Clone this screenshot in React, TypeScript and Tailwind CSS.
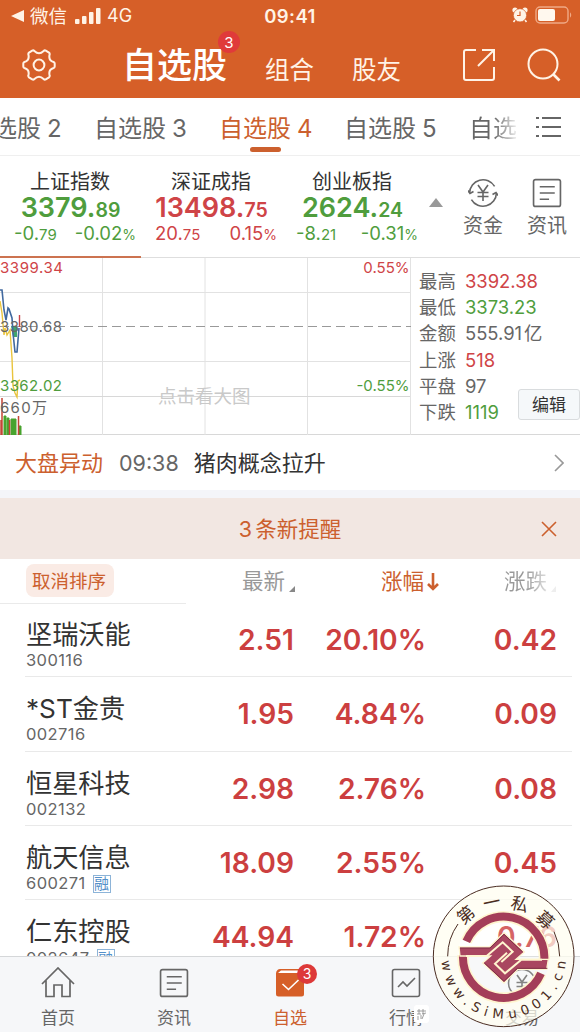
import type { ReactNode } from 'react'

type Tone = 'red' | 'green' | 'gray'

const toneText: Record<Tone, string> = {
  red: 'text-[#cf4447]',
  green: 'text-[#4f9d3d]',
  gray: 'text-[#666]',
}

const indices = [
  { name: '上证指数', whole: '3379.', frac: '89', diff: '-0.', diffFrac: '79', pct: '-0.02', tone: 'green' as Tone },
  { name: '深证成指', whole: '13498.', frac: '75', diff: '20.', diffFrac: '75', pct: '0.15', tone: 'red' as Tone },
  { name: '创业板指', whole: '2624.', frac: '24', diff: '-8.', diffFrac: '21', pct: '-0.31', tone: 'green' as Tone },
]

const stats = [
  { label: '最高', value: '3392.38', unit: '', tone: 'red' as Tone },
  { label: '最低', value: '3373.23', unit: '', tone: 'green' as Tone },
  { label: '金额', value: '555.91', unit: '亿', tone: 'gray' as Tone },
  { label: '上涨', value: '518', unit: '', tone: 'red' as Tone },
  { label: '平盘', value: '97', unit: '', tone: 'gray' as Tone },
  { label: '下跌', value: '1119', unit: '', tone: 'green' as Tone },
]

const stocks = [
  { name: '坚瑞沃能', code: '300116', price: '2.51', pct: '20.10%', diff: '0.42', margin: false },
  { name: '*ST金贵', code: '002716', price: '1.95', pct: '4.84%', diff: '0.09', margin: false },
  { name: '恒星科技', code: '002132', price: '2.98', pct: '2.76%', diff: '0.08', margin: false },
  { name: '航天信息', code: '600271', price: '18.09', pct: '2.55%', diff: '0.45', margin: true },
  { name: '仁东控股', code: '002647', price: '44.94', pct: '1.72%', diff: '0.76', margin: true },
]

function StatusBar() {
  return (
    <div className="grid h-8 grid-cols-3 items-center pl-[11px] pr-[8px] text-[#fff3e6]">
      <div className="flex items-center">
        <svg width="13" height="12" viewBox="0 0 13 12" fill="currentColor">
          <path d="M0 6 13 0V12Z" />
        </svg>
        <span className="ml-[6px] text-[18.5px] leading-8">微信</span>
        <svg className="ml-[8px]" width="26" height="16" viewBox="0 0 26 16" fill="currentColor">
          <rect x="0" y="11" width="4.5" height="5" rx="1" />
          <rect x="7" y="8" width="4.5" height="8" rx="1" />
          <rect x="14" y="4" width="4.5" height="12" rx="1" />
          <rect x="21" y="0" width="4.5" height="16" rx="1" />
        </svg>
        <span className="ml-[6px] text-[18px] leading-8">4G</span>
      </div>
      <div className="pr-[3px] text-center text-[18.5px] font-semibold leading-8 tracking-[0.4px]">09:41</div>
      <div className="flex items-center justify-end gap-[7px] pb-[2px]">
        <svg width="16" height="16" viewBox="0 0 16 16">
          <circle cx="3" cy="3" r="2.6" fill="currentColor" />
          <circle cx="13" cy="3" r="2.6" fill="currentColor" />
          <path d="m3 13-1.5 2M13 13l1.5 2" stroke="currentColor" strokeWidth="1.6" />
          <circle cx="8" cy="8.3" r="6.6" fill="currentColor" stroke="#d65f28" strokeWidth=".7" />
          <path d="M8 4.5v4H5" fill="none" stroke="#d65f28" strokeWidth="1.2" />
        </svg>
        <svg width="37" height="18" viewBox="0 0 37 18" fill="none">
          <rect x="1" y="1" width="32" height="16" rx="4" stroke="#f0a985" strokeWidth="1.4" />
          <rect x="3" y="3" width="17" height="12" rx="2" fill="#fff8ee" />
          <path d="M35 6.5c1.6.6 1.6 4.4 0 5Z" fill="#f0a985" />
        </svg>
      </div>
    </div>
  )
}

function Header() {
  return (
    <header className="h-[98px] shrink-0 bg-[#d65f28] text-[#fff3e6]">
      <StatusBar />
      <div className="flex h-[66px] items-center pl-[22px] pr-[19px]">
        <svg width="34" height="32" viewBox="0 0 34 32" fill="none" stroke="currentColor" strokeWidth="2" strokeLinejoin="round">
          <path d="M10.2 1.6 Q11.4 1 12.4 2 Q17 6.4 21.6 2 Q22.6 1 23.8 1.6 L27 3.6 Q28 4.4 27.6 5.6 Q26.2 11.4 31.6 13 Q32.7 13.4 32.7 14.4 V17.6 Q32.7 18.6 31.6 19 Q26.2 20.6 27.6 26.4 Q28 27.6 27 28.4 L23.8 30.4 Q22.6 31 21.6 30 Q17 25.6 12.4 30 Q11.4 31 10.2 30.4 L7 28.4 Q6 27.6 6.4 26.4 Q7.8 20.6 2.4 19 Q1.3 18.6 1.3 17.6 V14.4 Q1.3 13.4 2.4 13 Q7.8 11.4 6.4 5.6 Q6 4.4 7 3.6Z" />
          <circle cx="17" cy="16" r="5.4" />
        </svg>
        <div className="relative ml-[66px] w-[105px] whitespace-nowrap text-[35px] font-medium leading-[60px] text-white">
          自选股
          <span className="absolute -right-[13px] top-[-4px] flex size-[22px] items-center justify-center rounded-full bg-[#e03a3a] text-[15px] font-normal leading-none">3</span>
        </div>
        <span className="ml-[38px] pt-[9px] text-[24.5px] leading-8">组合</span>
        <span className="ml-[38px] pt-[9px] text-[24.5px] leading-8">股友</span>
        <svg className="ml-auto" width="34" height="34" viewBox="0 0 34 34" fill="none" stroke="currentColor" strokeWidth="2">
          <path d="M14 2H4Q2 2 2 4V30Q2 32 4 32H30Q32 32 32 30V19M20 2H32V13M32 2 16 18" />
        </svg>
        <svg className="ml-[31px]" width="34" height="34" viewBox="0 0 34 34" fill="none" stroke="currentColor" strokeWidth="2">
          <circle cx="16" cy="16" r="14.5" />
          <path d="m26.5 26.5 6 6" strokeWidth="2.6" />
        </svg>
      </div>
    </header>
  )
}

function GroupTabs() {
  return (
    <div className="flex h-[58px] shrink-0 border-b border-[#efefef] text-[24px] leading-[61px] text-[#666]">
      <div className="flex w-[518px] gap-[33px] overflow-hidden whitespace-nowrap">
        <span className="-ml-[31px] w-[92px] shrink-0">自选股<span className="ml-[6px]">2</span></span>
        <span className="w-[92px] shrink-0">自选股<span className="ml-[6px]">3</span></span>
        <span className="relative w-[92px] shrink-0 text-[#cc602e]">
          自选股<span className="ml-[6px]">4</span>
          <span className="absolute bottom-[3px] left-[31px] h-[5px] w-[31px] rounded-full bg-[#cc602e]" />
        </span>
        <span className="w-[92px] shrink-0">自选股<span className="ml-[6px]">5</span></span>
        <span className="w-[48px] shrink-0 bg-linear-to-r from-[#666] from-50% to-[#eee] bg-clip-text text-transparent">自选</span>
      </div>
      <svg className="ml-[17px] mt-[18px]" width="27" height="22" viewBox="0 0 27 22" fill="none" stroke="#666" strokeWidth="1.8">
        <path d="M1 2h3M7 2h19M1 11h3M7 11h19M1 20h3M7 20h19" />
      </svg>
    </div>
  )
}

function NewsIcon({ size }: { size: number }) {
  return (
    <svg width={size} height={size} viewBox="0 0 29 29" fill="none" stroke="#666" strokeWidth="1.6">
      <rect x="1.5" y="1.5" width="26" height="26" rx="2" />
      <path d="M7.5 8.5h14.5M7.5 14.5h14.5M7.5 20.5h9" />
    </svg>
  )
}

function IndexBar() {
  return (
    <div className="flex h-[102px] shrink-0 border-b border-[#dedede]">
      {indices.map((item, i) => (
        <div
          key={item.name}
          className={`flex w-[141px] flex-col items-center pt-[14px] ${i === 0 ? '-mb-px border-b-2 border-[#cc7350]' : ''}`}
        >
          <div className="pr-px text-[20px] leading-6 text-[#333]">{item.name}</div>
          <div className={`h-[26px] text-[27px] font-semibold leading-[27px] ${toneText[item.tone]}`}>
            {item.whole}<span className="text-[19.5px]">{item.frac}</span>
          </div>
          <div className={`mt-[1px] flex w-full justify-between pl-[14px] pr-[5px] text-[18.5px] leading-[25px] ${toneText[item.tone]}`}>
            <span>{item.diff}<span className="text-[15px]">{item.diffFrac}</span></span>
            <span>{item.pct}<span className="text-[14px]">%</span></span>
          </div>
        </div>
      ))}
      <svg className="ml-[6px] mt-[42px]" width="14" height="9" viewBox="0 0 14 9" fill="#999">
        <path d="M7 0 14 9H0Z" />
      </svg>
      <div className="ml-[19px] flex w-[42px] flex-col items-center pt-[22px]">
        <svg width="30" height="30" viewBox="0 0 30 30" fill="none" stroke="#666" strokeWidth="1.6">
          <path d="M1.6 15A13.4 13.4 0 0 1 26.6 8.4M28.4 15A13.4 13.4 0 0 1 3.4 21.6" />
          <path d="M0 12.5l2 3 3.5-2M30 17.5l-2-3-3.5 2" />
          <path d="m10 7 5 7 5-7M9.5 14.5h11M9.5 18.5h11M15 14v9" />
        </svg>
        <div className="mt-[2px] whitespace-nowrap text-[20px] leading-8 text-[#666]">资金</div>
      </div>
      <div className="ml-[22px] flex w-[42px] flex-col items-center pt-[22px]">
        <NewsIcon size={30} />
        <div className="mt-[2px] whitespace-nowrap text-[20px] leading-8 text-[#666]">资讯</div>
      </div>
    </div>
  )
}

function MinuteChart() {
  return (
    <svg width="411" height="177" viewBox="0 0 411 177" className="shrink-0" fontSize="15">
      <g stroke="#e2e2e2" fill="none">
        <path d="M0 34.5H410M0 103.5H410M102.5 0V177M205 0V177M307.5 0V177M410.5 0V177" />
        <path d="M0 138.5H410" stroke="#d8d8d8" />
      </g>
      <text x="158" y="145" fontSize="18.5" fill="#c9c9c9">点击看大图</text>
      <path d="M0 68.5H411" stroke="#999" strokeWidth="1.2" strokeDasharray="9 5" />
      <path d="M0 43 2 55 4 77 5 70 7 77 10 72 12 100 13 128 15 135 17 139 18 123 20 122" fill="none" stroke="#e9c43d" strokeWidth="1.4" />
      <path d="M11 68h6v11h-4Z" fill="#40a56e" />
      <path d="M0 32 2 32 4 52 6 62 8 50 9 51 12 60 13 75 15 94 17 94 19 70" fill="none" stroke="#41699f" strokeWidth="1.6" />
      <path d="M19.5 57V69" stroke="#c9454a" strokeWidth="1.4" />
      <path d="M4 158h2V177H4ZM7 160h2V177H7ZM11 161h5V177H11ZM19 168h2V177H19Z" fill="#48a32e" stroke="#48a32e" />
      <path d="M1 162V177M2 140V177M9.5 162V177M18.5 158V177" stroke="#c44536" strokeWidth="1.5" />
      <text x="0" y="15" fill="#cf4447" textLength="63">3399.34</text>
      <text x="0" y="74" fill="#666" textLength="62">3380.68</text>
      <text x="0" y="133" fill="#4f9d3d" textLength="62">3362.02</text>
      <text x="0" y="155" fill="#666" textLength="47">660万</text>
      <text x="409.5" y="15" fill="#cf4447" textAnchor="end">0.55%</text>
      <text x="409.5" y="133" fill="#4f9d3d" textAnchor="end">-0.55%</text>
    </svg>
  )
}

function MarketPanel() {
  return (
    <section className="flex h-[177px] shrink-0 border-b border-[#d8d8d8]">
      <MinuteChart />
      <div className="relative flex-1 pl-[8px] pt-[10px]">
        {stats.map((s) => (
          <div key={s.label} className="flex h-[26.2px] items-center text-[18.4px] leading-[26px]">
            <span className="w-[46px] text-[#666]">{s.label}</span>
            <span className={toneText[s.tone]}>{s.value}</span>
            {s.unit && <span className="ml-[2px] text-[#666]">{s.unit}</span>}
          </div>
        ))}
        <button className="absolute bottom-[14px] right-0 h-[31px] w-[62px] rounded-[3px] border border-[#d9dcde] bg-[#f5f8fa] pt-[2px] text-[17px] leading-none text-[#333]">
          编辑
        </button>
      </div>
    </section>
  )
}

function Notices() {
  return (
    <>
      <div className="flex h-[55px] shrink-0 items-center pl-[15px] pr-[16px] pt-px text-[22px]">
        <span className="text-[#cc602e]">大盘异动</span>
        <span className="ml-[16px] text-[21.5px] text-[#666]">09:38</span>
        <span className="ml-[15px] text-[#333]">猪肉概念拉升</span>
        <svg className="ml-auto" width="10" height="18" viewBox="0 0 10 18" fill="none" stroke="#999" strokeWidth="1.6">
          <path d="m1 1 8 8-8 8" />
        </svg>
      </div>
      <div className="h-2 shrink-0 bg-[#f4f5f9]" />
      <div className="grid h-[61px] shrink-0 grid-cols-[1fr_auto_1fr] items-center bg-[#f2e7e2] px-[23px] text-[21.5px] text-[#cc602e]">
        <span />
        <span className="pt-px"><span className="mr-[3px]">3</span>条新提醒</span>
        <svg className="justify-self-end" width="16" height="16" viewBox="0 0 16 16" fill="none" stroke="currentColor" strokeWidth="1.6">
          <path d="m1 1 14 14M15 1 1 15" />
        </svg>
      </div>
    </>
  )
}

function StockTable() {
  return (
    <section className="flex min-h-0 flex-1 flex-col overflow-hidden">
      <div className="grid h-[44px] shrink-0 grid-cols-[186px_109px_146px_115px] text-[21.5px] leading-[45px] text-[#999]">
        <div className="border-b border-[#eaeaea] pl-[26px] pt-[5px]">
          <div className="flex h-[33px] w-[88px] items-center justify-center rounded-lg bg-[#faebe5] pr-[2px] pt-px text-[18.5px] text-[#cc602e]">
            取消排序
          </div>
        </div>
        <div className="flex justify-end">
          最新
          <svg className="ml-[4px] mt-[27px]" width="6" height="6" fill="#888"><path d="M6 0V6H0Z" /></svg>
        </div>
        <div className="flex justify-end pr-[2px] text-[#cc602e]">
          涨幅
          <svg className="ml-[3px] mt-[14px]" width="12" height="18" viewBox="0 0 12 18" fill="none" stroke="currentColor" strokeWidth="2.6">
            <path d="M6 0V16M1 11l5 5 5-5" />
          </svg>
        </div>
        <div className="flex justify-end">
          <span className="bg-linear-to-r from-[#999] from-50% to-[#ddd] bg-clip-text text-transparent">涨跌</span>
          <svg className="ml-[4px] mt-[27px]" width="5" height="6" fill="#eee"><path d="M5 0V6H0Z" /></svg>
        </div>
      </div>
      {stocks.map((stock) => (
        <div
          key={stock.code}
          className="ml-[25px] mr-[8px] grid h-[74.3px] shrink-0 grid-cols-[161px_108px_132px_131px] border-b border-[#e9e9e9]"
        >
          <div className="pl-px pt-[14px]">
            <div className="text-[26.2px] leading-[36px] text-[#333]">{stock.name}</div>
            <div className="-mt-px flex items-center text-[16.5px] leading-[17px] text-[#666]">
              <span className="tracking-[0.4px]">{stock.code}</span>
              {stock.margin && (
                <span className="ml-[7px] flex size-[18px] items-center justify-center border border-[#8db4d8] text-[15px] text-[#5490c9]">融</span>
              )}
            </div>
          </div>
          {[stock.price, stock.pct, stock.diff].map((value, i) => (
            <div key={i} className="text-right text-[28.2px] font-semibold leading-[74px] text-[#cc3f40]">
              {value}
            </div>
          ))}
        </div>
      ))}
    </section>
  )
}

function NavItem({ label, active, children }: { label: string; active?: boolean; children: ReactNode }) {
  return (
    <div className={`flex flex-1 flex-col items-center pt-[10px] ${active ? 'text-[#cc602e]' : 'text-[#666]'}`}>
      <div className="relative flex h-[31px] items-center">{children}</div>
      <div className="mt-[7px] whitespace-nowrap text-[17px] leading-[26px]">{label}</div>
    </div>
  )
}

function BottomNav() {
  return (
    <nav className="flex h-[76px] shrink-0 border-t border-[#d5d7d9] bg-[#f6f7f9]">
      <NavItem label="首页">
        <svg width="34" height="31" viewBox="0 0 34 31" fill="none" stroke="currentColor" strokeWidth="1.7">
          <path d="M1 17 17 1l16 16M5 13.5V29.5H13V18H21V29.5H29V13.5" />
        </svg>
      </NavItem>
      <NavItem label="资讯"><NewsIcon size={30} /></NavItem>
      <NavItem label="自选" active>
        <svg width="30" height="30" viewBox="0 0 30 30" fill="none">
          <path d="M1 5Q2 1 5 1H25Q28 1 29 5V26Q29 28.5 26.5 28.5H3.5Q1 28.5 1 26Z" fill="#d65f28" />
          <path d="M3 5 6 2.5H24L27 5Z" fill="#fff" />
          <path d="m7.5 16 6 5.5 10-9.5" stroke="#fff" strokeWidth="1.6" />
        </svg>
        <span className="absolute -right-[12px] -top-[3px] flex size-[20px] items-center justify-center rounded-full bg-[#dd3939] text-[14px] leading-none text-white">3</span>
      </NavItem>
      <NavItem label="行情">
        <svg width="30" height="30" viewBox="0 0 30 30" fill="none" stroke="currentColor" strokeWidth="1.6">
          <rect x="1.5" y="1.5" width="27" height="27" rx="2" />
          <path d="m7 19 5-5 4 4 8-8" />
        </svg>
        <div className="absolute -right-[8px] top-[38px] flex h-[18px] w-[15px] items-center justify-center rounded-[3px] bg-white">
          <svg width="9" height="11" viewBox="0 0 9 11" fill="none" stroke="#888" strokeWidth=".8">
            <path d="M0 2h9M2 0v5M6 0v5M0 5h4M5 5l4-1M1 7v4M4 6v4M7 5 5 10" />
          </svg>
        </div>
      </NavItem>
      <NavItem label="交易">
        <svg width="30" height="30" viewBox="0 0 30 30" fill="none" stroke="currentColor" strokeWidth="1.6">
          <circle cx="15" cy="15" r="13.5" />
          <path d="m10 7 5 7 5-7M9.5 14.5h11M9.5 18.5h11M15 14v9" />
        </svg>
      </NavItem>
    </nav>
  )
}

const sealChars = [
  { char: '第', x: 107, y: 98, angle: -40 },
  { char: '一', x: 185, y: 60, angle: -12 },
  { char: '私', x: 269, y: 66, angle: 14 },
  { char: '募', x: 346, y: 113, angle: 42 },
]

// Round seal laid over the bottom right corner
function Seal() {
  return (
    <svg className="absolute bottom-0 right-0" width="150" height="150" viewBox="0 0 450 450" fill="none">
      <defs>
        <path id="seal-url" d="M34 223A187 187 0 0 0 408 223" />
      </defs>
      <circle cx="221" cy="223" r="174" stroke="#fffdf0" strokeOpacity=".74" strokeWidth="74" />
      <circle cx="221" cy="223" r="137" fill="#fffefa" fillOpacity=".2" />
      <circle cx="221" cy="223" r="211" stroke="#4a2c22" strokeWidth="3" />
      <path d="M53 223A168 168 0 0 1 84 126M372 149A168 168 0 0 1 389 223" stroke="#4a2c22" strokeWidth="3" />
      <g stroke="#fff5cf" strokeWidth="34">
        <path d="M109 178A122 122 0 0 1 343 232M333 274A122 122 0 0 1 99 220" />
      </g>
      <g stroke="#a43e59" strokeWidth="24">
        <path d="M109 178A122 122 0 0 1 343 232M333 274A122 122 0 0 1 99 220" />
      </g>
      <path
        d="M87 195H178L222 152 283 210 258 232H355L350 262H264L222 303 158 243 182 222H90Z"
        fill="#a94660"
        stroke="#fff5cf"
        strokeWidth="4"
      />
      <path d="M90 198H180L222 157 278 210M352 259H262L222 298 163 243" stroke="#7e2e44" strokeWidth="3" />
      <path d="M108 222H170L218 181 248 209 214 240M336 233H274L225 274 195 245 231 212" stroke="#fff5cf" strokeWidth="6" />
      {sealChars.map((c) => (
        <text
          key={c.char}
          x={c.x}
          y={c.y}
          transform={`rotate(${c.angle} ${c.x} ${c.y})`}
          fontSize="52"
          fill="#4a2c22"
          textAnchor="middle"
          dominantBaseline="central"
        >
          {c.char}
        </text>
      ))}
      <text className="font-['DejaVu_Sans',sans-serif]" fontSize="40" fill="#4a2c22">
        <textPath href="#seal-url" startOffset="14" textLength="558" lengthAdjust="spacing">www.SiMu001.cn</textPath>
      </text>
    </svg>
  )
}

export default function App() {
  return (
    <div className="relative flex h-[1032px] w-[580px] flex-col overflow-hidden bg-white font-['Inter','Noto_Sans_CJK_SC',sans-serif]">
      <Header />
      <GroupTabs />
      <IndexBar />
      <MarketPanel />
      <Notices />
      <StockTable />
      <BottomNav />
      <Seal />
    </div>
  )
}
